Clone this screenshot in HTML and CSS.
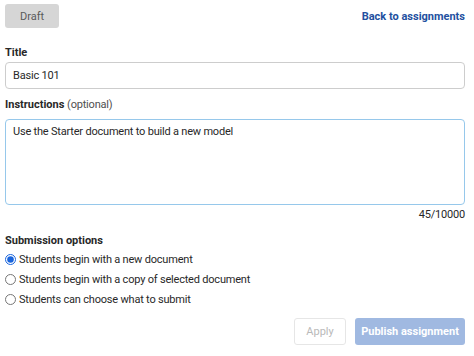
FILE: index.html
```html
<!DOCTYPE html>
<html>

<head>
    <meta charset="UTF-8">
    <meta name="viewport" content="width=device-width, initial-scale=1.0">
    <title>Assignment</title>
    <link rel="stylesheet" href="styles.css">
</head>

<body>
    <div class="assignment">
        <div class="assignment__top">
            <button class="button button--draft">Draft</button>
            <a class="assignment__back" href="#">Back to assignments</a>
        </div>

        <label class="assignment__label assignment__label--title">Title</label>
        <input type="text" class="input assignment__title" value="Basic 101">

        <label class="assignment__label">Instructions <span class="assignment__hint">(optional)</span></label>
        <textarea class="input assignment__text">Use the Starter document to build a new model</textarea>
        <div class="assignment__count">45/10000</div>

        <div class="assignment__label assignment__label--options">Submission options</div>
        <label class="option"><input type="radio" name="sub" checked> Students begin with a new document</label>
        <label class="option"><input type="radio" name="sub"> Students begin with a copy of selected document</label>
        <label class="option"><input type="radio" name="sub"> Students can choose what to submit</label>

        <div class="assignment__actions">
            <button class="button button--apply">Apply</button>
            <button class="button button--publish">Publish assignment</button>
        </div>
    </div>
</body>

</html>
```

FILE: styles.css
```css
*,
*::before,
*::after {
    box-sizing: border-box;
    margin: 0;
    padding: 0;
}

body {
    font-family: Roboto, "Noto Sans", sans-serif;
    font-size: 11px;
    color: rgb(40, 40, 40);
    background-color: white;
}

.assignment {
    width: 460px;
    margin: 4px 0 0 5px;
    display: flex;
    flex-direction: column;
}

.assignment__top {
    display: flex;
    justify-content: space-between;
    align-items: center;
    height: 24px;
}

.button {
    border: none;
    font-family: inherit;
    font-size: 11px;
    border-radius: 3px;
}

.button--draft {
    width: 54px;
    height: 24px;
    background-color: rgb(214, 214, 214);
    color: rgb(90, 90, 90);
}

.assignment__back {
    color: rgb(35, 80, 160);
    font-weight: bold;
    text-decoration: none;
}

.assignment__label {
    font-weight: bold;
    margin-top: 9px;
    margin-bottom: 7px;
    line-height: 14px;
}

.assignment__label--title {
    margin-top: 18px;
    margin-bottom: 2px;
}

.assignment__hint {
    font-weight: normal;
    color: rgb(80, 80, 80);
    letter-spacing: -0.2px;
}

.input {
    font-family: inherit;
    font-size: 11px;
    letter-spacing: -0.2px;
    color: rgb(40, 40, 40);
    border: 1px solid rgb(205, 205, 205);
    border-radius: 4px;
    outline: none;
    width: 100%;
}

.assignment__title {
    height: 27px;
    padding: 0 7px;
}

.assignment__text {
    height: 86px;
    padding: 5px 7px;
    resize: none;
    border-color: rgb(150, 200, 235);
    line-height: 14px;
}

.assignment__count {
    text-align: right;
    margin-top: 3px;
    line-height: 14px;
    letter-spacing: -0.2px;
}

.assignment__label--options {
    margin-top: 12px;
    margin-bottom: 1px;
}

.option {
    display: flex;
    align-items: center;
    gap: 2px;
    height: 20px;
    letter-spacing: -0.2px;
}

.option input {
    width: 11px;
    height: 11px;
    margin: 0 1px 0 0;
    accent-color: rgb(25, 100, 220);
}

.assignment__actions {
    display: flex;
    justify-content: flex-end;
    gap: 9px;
    margin-top: 9px;
}

.button--apply {
    width: 52px;
    height: 27px;
    background-color: white;
    border: 1px solid rgb(230, 230, 230);
    color: rgb(185, 185, 185);
}

.button--publish {
    width: 110px;
    height: 27px;
    background-color: rgb(160, 185, 225);
    color: white;
    font-weight: bold;
}
```
